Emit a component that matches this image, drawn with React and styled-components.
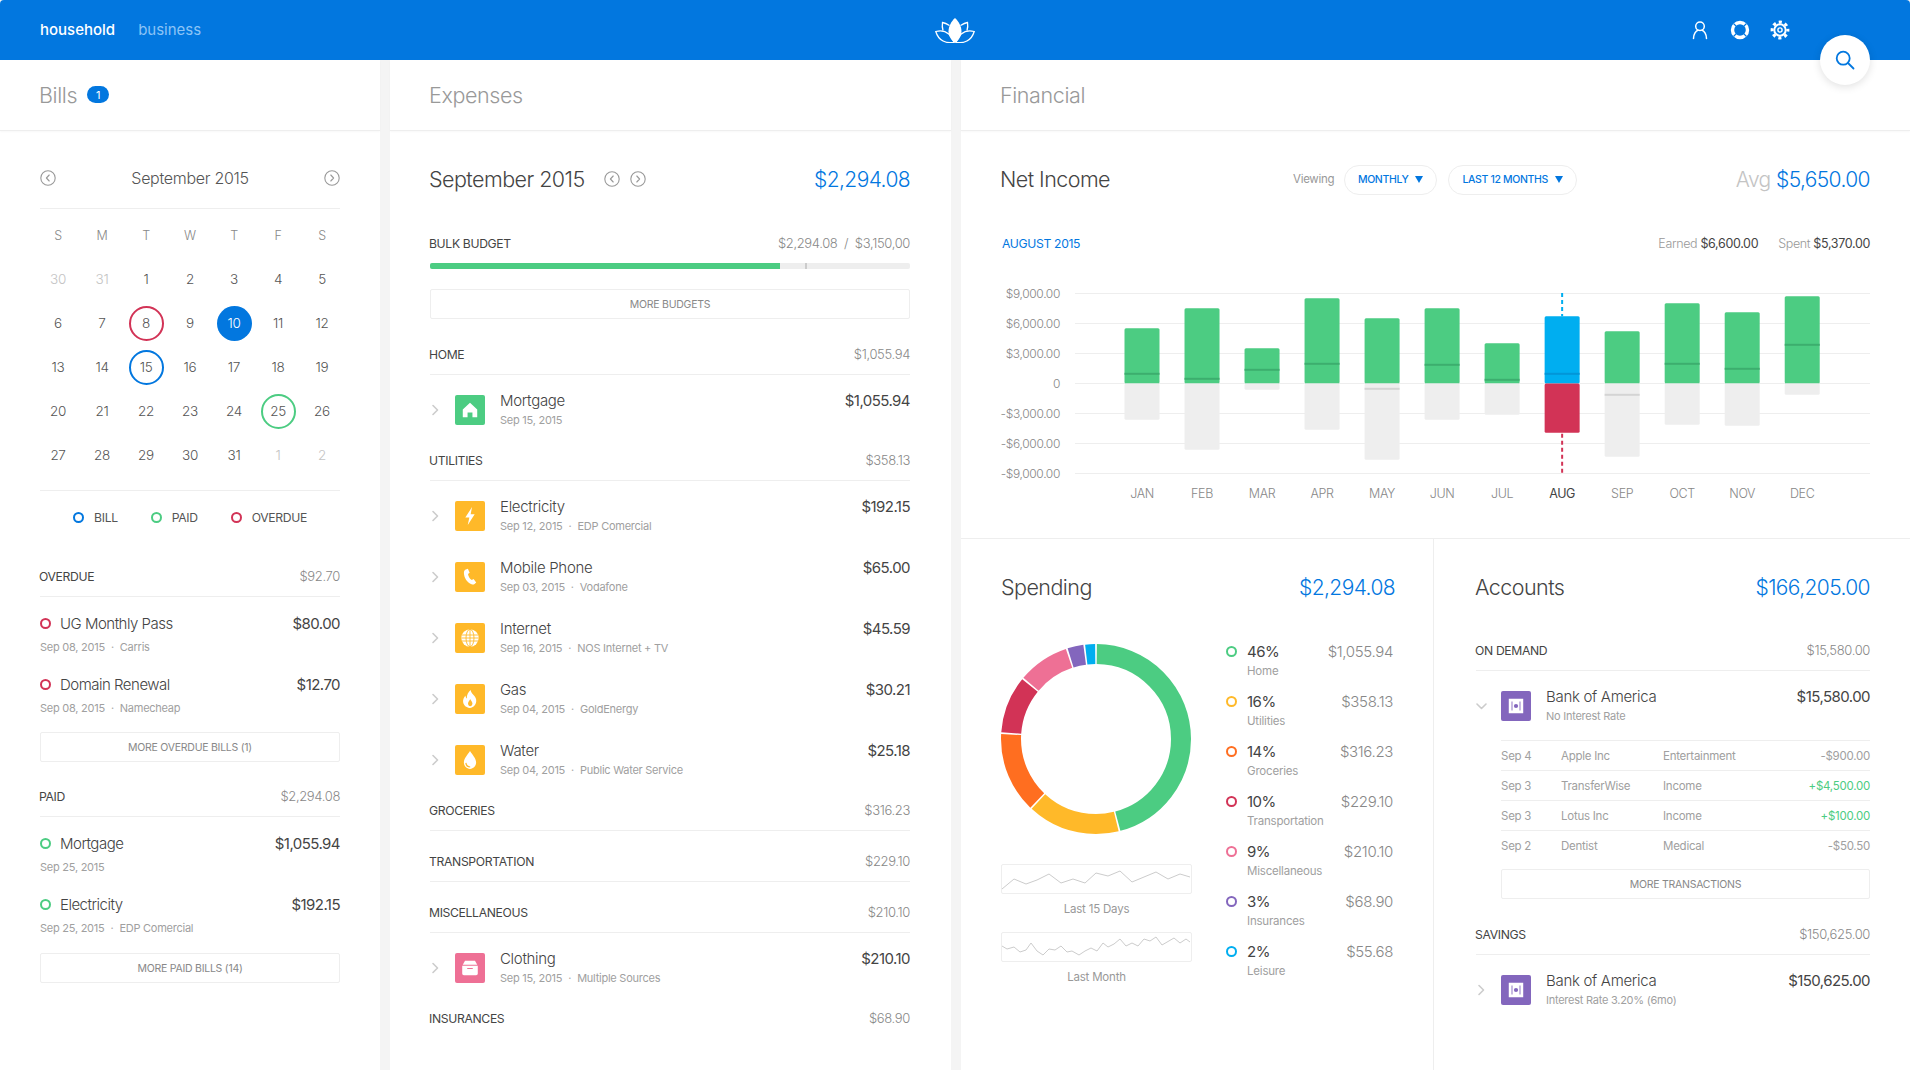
import React from 'react';
import styled, { createGlobalStyle } from 'styled-components';

const BLUE = '#0277df';
const GREEN = '#4ccc82';
const YELLOW = '#ffb929';
const ORANGE = '#ff6e20';
const RED = '#d23356';
const PINK = '#ee7095';
const PURPLE = '#8366bd';
const CYAN = '#00aef0';

const GlobalStyle = createGlobalStyle`
  html, body {
    margin: 0;
    padding: 0;
    background: #fff;
  }
  body {
    font-family: Inter, "Liberation Sans", sans-serif;
    color: #444;
    letter-spacing: -0.3px;
  }
  * { box-sizing: border-box; }
`;

const Page = styled.div`
  width: 1910px;
  height: 1070px;
  overflow: hidden;
  position: relative;
  display: flex;
  flex-direction: column;
  background: #f4f4f4;
`;

const TopBar = styled.header`
  height: 60px;
  flex: none;
  background: ${BLUE};
  border-radius: 4px 4px 0 0;
  display: grid;
  grid-template-columns: 1fr auto 1fr;
  align-items: center;
  padding: 0 40px;
`;

const Tabs = styled.nav`
  display: flex;
  gap: 23px;
  padding-bottom: 2px;
`;

const Tab = styled.span`
  font-size: 15px;
  font-weight: ${p => (p.$active ? 500 : 400)};
  color: ${p => (p.$active ? '#fff' : '#8cc4f6')};
  letter-spacing: 0;
`;

const LogoMark = styled.svg`
  width: 40px;
  height: 25px;
  display: block;
`;

const TopIcons = styled.div`
  display: flex;
  justify-content: flex-end;
  gap: 20px;
  padding-right: 80px;
`;

const TopIcon = styled.svg`
  width: 20px;
  height: 20px;
  display: block;
`;

const SearchButton = styled.button`
  position: absolute;
  top: 35px;
  right: 40px;
  width: 50px;
  height: 50px;
  padding: 0;
  border: 0;
  border-radius: 50%;
  background: #fff;
  box-shadow: 0 2px 8px rgba(0, 0, 0, 0.12);
  display: flex;
  align-items: center;
  justify-content: center;
`;

const Columns = styled.main`
  flex: 1;
  min-height: 0;
  display: grid;
  grid-template-columns: 380px 561px 949px;
  gap: 10px;
`;

const Panel = styled.section`
  background: #fff;
  display: flex;
  flex-direction: column;
  min-height: 0;
`;

const PanelHead = styled.div`
  height: 71px;
  flex: none;
  padding: 0 0 1px 39px;
  display: flex;
  align-items: center;
  gap: 10px;
  border-bottom: 1px solid #eee;
  box-shadow: 0 1px 2px rgba(0, 0, 0, 0.03);
`;

const PanelTitle = styled.h1`
  margin: 0;
  font-size: 21.5px;
  font-weight: 300;
  color: #999;
  letter-spacing: -0.4px;
`;

const Badge = styled.span`
  width: 22px;
  height: 17px;
  border-radius: 9px;
  background: ${BLUE};
  color: #fff;
  font-size: 11px;
  display: flex;
  align-items: center;
  justify-content: center;
`;

const PanelBody = styled.div`
  padding: 0 ${p => p.$right ?? 40}px 0 ${p => p.$left ?? 40}px;
`;

const CalHead = styled.div`
  margin-top: 30px;
  height: 48px;
  padding-bottom: 13px;
  border-bottom: 1px solid #eee;
  display: flex;
  align-items: center;
  justify-content: space-between;
`;

const CalTitle = styled.span`
  font-size: 16px;
  font-weight: 300;
  color: #555;
  letter-spacing: -0.3px;
`;

const RoundArrow = styled.svg`
  width: 16px;
  height: 16px;
  display: block;
  flex: none;
`;

const CalGrid = styled.div`
  margin: 5px -4px 0;
  display: grid;
  grid-template-columns: repeat(7, 44px);
  grid-template-rows: 43px repeat(5, 44px);
  justify-content: center;
`;

const WeekDay = styled.div`
  font-size: 12.5px;
  font-weight: 300;
  color: #888;
  display: flex;
  align-items: center;
  justify-content: center;
`;

const markColors = { overdue: RED, due: BLUE, paid: GREEN };

const Day = styled.div`
  width: 35px;
  height: 35px;
  margin: auto;
  border-radius: 50%;
  font-size: 13.5px;
  font-weight: 300;
  display: flex;
  align-items: center;
  justify-content: center;
  color: ${p => (p.$muted ? '#c4c4c4' : p.$today ? '#fff' : '#555')};
  background: ${p => (p.$today ? BLUE : 'transparent')};
  border: 2px solid ${p => markColors[p.$mark] || 'transparent'};
`;

const Legend = styled.div`
  margin-top: 13px;
  height: 53px;
  border-top: 1px solid #eee;
  display: flex;
  align-items: center;
  justify-content: center;
  gap: 33px;
`;

const LegendItem = styled.span`
  display: flex;
  align-items: center;
  gap: 10px;
  font-size: 12.2px;
  color: #555;
  letter-spacing: -0.35px;
`;

const Ring = styled.i`
  width: 11px;
  height: 11px;
  flex: none;
  display: block;
  border-radius: 50%;
  border: 2px solid ${p => p.$color};
`;

const SectionHead = styled.div`
  height: 41px;
  flex: none;
  margin-top: ${p => p.$gap ?? 15}px;
  border-bottom: 1px solid ${p => (p.$plain ? 'transparent' : '#eee')};
  display: flex;
  align-items: center;
  justify-content: space-between;
  font-size: 12.2px;
  color: #444;
  letter-spacing: -0.35px;
`;

const SectionName = styled.span`
  margin-left: -1px;
`;

const GreyAmount = styled.span`
  font-size: 13px;
  font-weight: 300;
  color: #888;
`;

const BillRow = styled.div`
  height: 61px;
  padding-top: 16px;
`;

const BillLine = styled.div`
  height: 20px;
  display: flex;
  align-items: center;
  gap: 9px;
  font-size: 15px;
  font-weight: 300;
  color: #444;
  letter-spacing: -0.5px;
`;

const Amount = styled.span`
  margin-left: auto;
  font-size: 15px;
  font-weight: 400;
  color: #444;
  letter-spacing: -0.55px;
`;

const Meta = styled.div`
  height: 20px;
  margin-top: ${p => p.$gap || 0}px;
  display: flex;
  align-items: center;
  gap: 5px;
  font-size: 11px;
  font-weight: 400;
  color: #a0a0a0;
  letter-spacing: -0.25px;
`;

const OutlineButton = styled.button`
  display: block;
  width: 100%;
  height: 30px;
  margin-top: ${p => p.$gap ?? 13}px;
  padding: 0;
  background: #fff;
  border: 1px solid #eee;
  border-radius: 2px;
  font-family: inherit;
  font-size: 10.5px;
  font-weight: 400;
  color: #888;
  letter-spacing: -0.25px;
`;

const TitleRow = styled.div`
  margin-top: 30px;
  height: 36px;
  display: flex;
  align-items: center;
`;

const LargeTitle = styled.h2`
  margin: 0 0 0 -1px;
  font-size: 21.5px;
  font-weight: 300;
  color: #444;
  letter-spacing: -0.55px;
`;

const LargeTotal = styled.span`
  margin-left: auto;
  font-size: 21px;
  font-weight: 300;
  color: ${BLUE};
  letter-spacing: -0.6px;
`;

const ArrowPair = styled.div`
  display: flex;
  gap: 10px;
  margin-left: 19px;
`;

const InfoRow = styled.div`
  margin-top: ${p => p.$gap ?? 36}px;
  height: 20px;
  display: flex;
  align-items: center;
  justify-content: space-between;
  font-size: 12.2px;
  color: #444;
  letter-spacing: -0.35px;
`;

const Track = styled.div`
  height: 6px;
  margin-top: 10px;
  border-radius: 2px;
  background: #eee;
  position: relative;
`;

const TrackFill = styled.div`
  width: ${p => p.$width}px;
  height: 100%;
  border-radius: 2px 0 0 2px;
  background: ${GREEN};
`;

const TrackTick = styled.i`
  position: absolute;
  left: 375px;
  top: 0;
  width: 2px;
  height: 6px;
  background: #ccc;
`;

const Row = styled.div`
  display: flex;
  align-items: center;
  height: 30px;
  margin-top: ${p => p.$gap ?? 31}px;
`;

const RowArrow = styled.svg`
  width: 25px;
  height: 14px;
  flex: none;
  display: block;
`;

const Tile = styled.div`
  width: 30px;
  height: 30px;
  flex: none;
  border-radius: 2px;
  background: ${p => p.$color};
  display: flex;
  align-items: center;
  justify-content: center;
`;

const TileIcon = styled.svg`
  width: 20px;
  height: 20px;
  display: block;
`;

const RowText = styled.div`
  margin: 0 0 0 15px;
  height: 40px;
`;

const RowTitle = styled.div`
  height: 20px;
  display: flex;
  align-items: center;
  font-size: 15px;
  font-weight: 300;
  color: #444;
`;

const RowAmount = styled(Amount)`
  align-self: flex-start;
  height: 20px;
  line-height: 20px;
  margin-top: -4px;
`;

const Dot = styled.span`
  color: #aaa;
  padding: 0 1px;
`;

const Viewing = styled.span`
  margin-left: 183px;
  font-size: 11.5px;
  color: #999;
`;

const Pill = styled.button`
  height: 30px;
  margin-top: 1px;
  margin-left: ${p => p.$gap}px;
  width: ${p => p.$width}px;
  padding: 0;
  background: #fff;
  border: 1px solid #eee;
  border-radius: 15px;
  font-family: inherit;
  font-size: 10.5px;
  font-weight: 500;
  color: ${BLUE};
  letter-spacing: -0.35px;
  display: flex;
  align-items: center;
  justify-content: center;
  gap: 7px;
`;

const Caret = styled.i`
  width: 0;
  height: 0;
  display: block;
  border-left: 4px solid transparent;
  border-right: 4px solid transparent;
  border-top: 7px solid ${BLUE};
`;

const AvgLabel = styled.span`
  font-weight: 300;
  color: #c4c4c4;
`;

const BlueLabel = styled.span`
  color: ${BLUE};
  margin-left: 1px;
`;

const EarnedBox = styled.div`
  display: flex;
  gap: 20px;
  font-size: 12.5px;
  color: #444;
`;

const SoftLabel = styled.span`
  color: #999;
  font-weight: 300;
`;

const ChartBox = styled.div`
  height: 284px;
  margin: 1px 0 0 -1px;
`;

const ChartSvg = styled.svg`
  width: 870px;
  height: 284px;
  display: block;
  font-family: Inter, "Liberation Sans", sans-serif;
  letter-spacing: -0.35px;
`;

const TopSection = styled.div`
  padding: 0 40px 0 40px;
  border-bottom: 1px solid #eee;
  flex: none;
`;

const BottomGrid = styled.div`
  flex: 1;
  min-height: 0;
  display: grid;
  grid-template-columns: 473px 1fr;
`;

const SpendingCol = styled.div`
  padding: 0 38px 0 41px;
  border-right: 1px solid #eee;
`;

const AccountsCol = styled.div`
  padding: 0 40px 0 42px;
`;

const SpendingGrid = styled.div`
  margin-top: 37px;
  display: grid;
  grid-template-columns: 190px 167px;
  column-gap: 34px;
`;

const DonutCol = styled.div`
  padding-top: 2px;
  margin-left: -1px;
`;

const DonutSvg = styled.svg`
  width: 190px;
  height: 190px;
  display: block;
  margin-bottom: 30px;
`;

const SparkBox = styled.div`
  height: 30px;
  border: 1px solid #eee;
  border-radius: 2px;
  margin-top: ${p => p.$gap || 0}px;
`;

const SparkSvg = styled.svg`
  width: 188px;
  height: 28px;
  display: block;
`;

const SparkLabel = styled.div`
  height: 20px;
  margin-top: 5px;
  text-align: center;
  line-height: 20px;
  font-size: 11.5px;
  color: #999;
  letter-spacing: -0.2px;
`;

const LegendList = styled.div`
  display: flex;
  flex-direction: column;
`;

const SpendRow = styled.div`
  height: 50px;
  display: grid;
  grid-template-columns: 11px 1fr auto;
  grid-template-rows: 19px 20px;
  column-gap: 10px;
  align-items: center;
`;

const Percent = styled.span`
  font-size: 15px;
  font-weight: 400;
  color: #444;
  letter-spacing: -0.5px;
`;

const SpendAmount = styled.span`
  font-size: 15px;
  font-weight: 300;
  color: #888;
  letter-spacing: -0.35px;
`;

const SpendName = styled.span`
  grid-column: 2 / 4;
  font-size: 11.5px;
  color: #a0a0a0;
  letter-spacing: -0.2px;
`;

const TxTable = styled.div`
  margin: 19px 0 0 25px;
`;

const TxRow = styled.div`
  height: 30px;
  border-top: 1px solid #eee;
  display: grid;
  grid-template-columns: 60px 102px 1fr auto;
  align-items: center;
  font-size: 11.5px;
  color: #a0a0a0;
  letter-spacing: -0.25px;
`;

const TxAmount = styled.span`
  color: ${p => (p.$in ? GREEN : '#a0a0a0')};
`;

const TxFooter = styled.div`
  margin-left: 25px;
`;

// ---- drawings ----

const ArrowCircle = ({ left }) => (
  <RoundArrow viewBox="0 0 16 16" fill="none" stroke="#999" strokeWidth="1.1" strokeLinecap="round" strokeLinejoin="round">
    <circle cx="8" cy="8" r="7.2" />
    <path d={left ? 'M9.2 5L6.4 8l2.8 3' : 'M6.8 5l2.8 3-2.8 3'} />
  </RoundArrow>
);

const Chevron = ({ open }) => (
  <RowArrow viewBox="0 0 25 14" fill="none" stroke="#ccc" strokeWidth="1.6" strokeLinecap="round" strokeLinejoin="round">
    <path d={open ? 'M1 5l4.5 4.5L10 5' : 'M3 2.5L7.5 7 3 11.5'} />
  </RowArrow>
);

const tileDrawings = {
  home: <path fill="#fff" d="M9 2.5L2.5 8.6V15.5h4.3v-4.3h4.4v4.3h4.3V8.6z" />,
  bolt: <path fill="#fff" d="M10.8 1L4.8 10.4h3.6L7 17l6.2-9.6H9.6z" />,
  phone: (
    <path
      fill="#fff"
      d="M5.2 2.2l1.9-.6 1.6 3.6-1.5 1.1c.3 2.2 1.6 4.3 3.4 5.5l1.6-.9 2.4 3-1.5 1.4c-.7.6-1.8.7-2.7.3C6.500 13.900 3.700 9.800 3.500 5.300c0-1.400.6-2.600 1.700-3.100z"
    />
  ),
  globe: (
    <g>
      <circle cx="9" cy="9" r="7.800" fill="#fff" />
      <g stroke={YELLOW} strokeWidth="0.8" fill="none">
        <ellipse cx="9" cy="9" rx="3.600" ry="7.800" />
        <path d="M9 1.200v15.600M1.400 6.300h15.200M1.200 9h15.600M1.400 11.700h15.200" />
      </g>
    </g>
  ),
  flame: (
    <path
      fill="#fff"
      fillRule="evenodd"
      d="M9.500 1c.6 2.700 2.200 3.700 3.500 5.400 1.100 1.400 1.800 3 1.600 4.800-.3 3.100-2.800 5.500-5.600 5.800-3 .2-5.800-2-6.200-5.200-.3-2.200.8-4.300 2.100-5.900.1 1.200.5 2.100 1.300 2.700C5.800 5.600 7.500 3 9.500 1zM9.200 9c-.3 1.400-1.900 2.300-2 4 0 1.400 1 2.500 2 2.500s2-1.100 2-2.500c-.1-1.700-1.700-2.600-2-4z"
    />
  ),
  drop: (
    <g>
      <path fill="#fff" d="M9 1c2.200 3.400 5.500 6.700 5.500 10.300 0 3.200-2.500 5.700-5.500 5.700s-5.500-2.500-5.500-5.700C3.500 7.700 6.800 4.400 9 1z" />
      <path fill="none" stroke={YELLOW} strokeWidth="1.100" d="M5.300 11.600c.2 2 1.800 3.600 3.900 3.700" />
    </g>
  ),
  box: (
    <g>
      <path fill="#fff" d="M4.500 2.500h9L15.500 6h-13z" />
      <path fill="#fff" fillRule="evenodd" d="M2 7h14v7c0 .9-.7 1.500-1.500 1.500h-11C2.700 15.500 2 14.900 2 14zM6.500 9v1h5V9z" />
    </g>
  ),
  safe: (
    <g>
      <path fill="#fff" fillRule="evenodd" d="M2.500 2.500h13v13h-13zM5 5v8h.8V5zM12.200 5v8h.8V5z" />
      <circle cx="9" cy="9" r="1.900" fill={PURPLE} />
    </g>
  ),
};

const CategoryTile = ({ kind, color }) => (
  <Tile $color={color}>
    <TileIcon viewBox="0 0 18 18">{tileDrawings[kind]}</TileIcon>
  </Tile>
);

const Lotus = () => (
  <LogoMark viewBox="0 0 40 25" fill="none" stroke="#fff" strokeWidth="1.300">
    <path fill="#fff" stroke="none" d="M20 0c3.500 3.500 6.500 8 6.500 13.500 0 4.500-3 9-6.500 11.500-3.500-2.500-6.500-7-6.500-11.500C13.500 8 16.500 3.500 20 0z" />
    <path d="M14.500 7.500C12 6 10 5 7.500 4.500c-.5 3-.3 5.500.5 8M25.500 7.500C28 6 30 5 32.500 4.500c.5 3 .3 5.500-.5 8" />
    <path d="M.8 13.500c5-1.500 9.500-.5 13 2.500 2.500 2.300 4 5.300 5.200 8.300-7.500 1.500-15.500-1.300-18.200-10.800z" />
    <path d="M39.200 13.500c-5-1.500-9.500-.5-13 2.500-2.500 2.300-4 5.300-5.200 8.300 7.500 1.500 15.500-1.300 18.200-10.800z" />
  </LogoMark>
);

const UserIcon = () => (
  <TopIcon viewBox="0 0 20 20" fill="none" stroke="#fff" strokeWidth="1.500" strokeLinecap="round">
    <circle cx="10" cy="6.300" r="4.300" />
    <path d="M3.500 18.500c0-4.500 2.500-7.800 4.500-8.200M16.500 18.500c0-4.500-2.500-7.800-4.500-8.200" />
  </TopIcon>
);

const BuoyIcon = () => (
  <TopIcon viewBox="0 0 20 20" fill="none">
    <circle cx="10" cy="10" r="7.500" stroke="#fff" strokeWidth="3.400" />
    <path stroke={BLUE} strokeWidth="1.200" d="M3.500 3.500l3.800 3.800M16.500 3.500l-3.800 3.800M3.500 16.500l3.800-3.800M16.500 16.500l-3.800-3.800" />
  </TopIcon>
);

const GearIcon = () => (
  <TopIcon viewBox="0 0 20 20" fill="none" stroke="#fff">
    <circle cx="10" cy="10" r="7.900" strokeWidth="3" strokeDasharray="3.100 3.105" strokeDashoffset="1.500" />
    <circle cx="10" cy="10" r="5.700" strokeWidth="2" />
    <circle cx="10" cy="10" r="2.100" strokeWidth="1.400" />
  </TopIcon>
);

const SearchIcon = () => (
  <svg width="20" height="20" viewBox="0 0 20 20" fill="none" stroke={BLUE} strokeWidth="1.800" strokeLinecap="round">
    <circle cx="8.200" cy="8.200" r="6.500" />
    <path d="M13 13l5.500 5.500" />
  </svg>
);

// ---- data ----

const months = [
  ['JAN', 55.3, 9.7, 36.3],
  ['FEB', 75.3, 4.7, 66.3],
  ['MAR', 35.3, 13.7, 6.3],
  ['APR', 85.3, 19.7, 46.3],
  ['MAY', 65.3, 0, 76.3, 5.3],
  ['JUN', 75.3, 18.7, 36.3],
  ['JUL', 40.3, 3.7, 31.3],
  ['AUG', 67.3, 9.7, 49.3],
  ['SEP', 52.3, 0, 73.3, 11.3],
  ['OCT', 80.3, 19.7, 41.3],
  ['NOV', 71.3, 14.7, 42.3],
  ['DEC', 87.3, 38.7, 11.3],
];

const axis = ['$9,000.00', '$6,000.00', '$3,000.00', '0', '-$3,000.00', '-$6,000.00', '-$9,000.00'];

const NetIncomeChart = () => {
  const zero = 383.5;
  return (
    <ChartSvg viewBox="1000 254 870 284">
      {axis.map((label, i) => {
        const y = 293.5 + i * 30;
        return (
          <g key={label}>
            <line x1="1075" x2="1870" y1={y} y2={y} stroke="#eee" strokeWidth="1" />
            <text x="1060" y={y + 4.5} textAnchor="end" fontSize="12" fontWeight="300" fill="#888">{label}</text>
          </g>
        );
      })}
      {months.map(([name, up, mark, down, downMark], i) => {
        const cx = 1142 + i * 60.020;
        const x = cx - 17.500;
        const active = name === 'AUG';
        return (
          <g key={name}>
            <rect x={x} y={zero - up} width="35" height={up} rx="1.500" fill={active ? CYAN : GREEN} />
            <rect x={x} y={zero} width="35" height={down} rx="1.500" fill={active ? RED : '#eee'} />
            {mark > 0 && <rect x={x} y={zero - mark - 1} width="35" height="2" fill={active ? '#0296d8' : '#3cae6e'} />}
            {downMark && <rect x={x} y={zero + downMark - 1} width="35" height="2" fill="#d4d4d4" />}
            {active && (
              <g strokeWidth="2" strokeDasharray="4 3">
                <line x1={cx} x2={cx} y1="293" y2={zero - up} stroke={CYAN} />
                <line x1={cx} x2={cx} y1={zero + down + 1} y2="474" stroke={RED} />
              </g>
            )}
            <text x={cx} y="498" textAnchor="middle" fontSize="12.500" fontWeight={active ? 400 : 300} fill={active ? '#444' : '#888'}>{name}</text>
          </g>
        );
      })}
    </ChartSvg>
  );
};

const spending = [
  ['46%', 'Home', '$1,055.94', GREEN, 46],
  ['16%', 'Utilities', '$358.13', YELLOW, 16],
  ['14%', 'Groceries', '$316.23', ORANGE, 14],
  ['10%', 'Transportation', '$229.10', RED, 10],
  ['9%', 'Miscellaneous', '$210.10', PINK, 9],
  ['3%', 'Insurances', '$68.90', PURPLE, 3],
  ['2%', 'Leisure', '$55.68', CYAN, 2],
];

const Donut = () => {
  let start = 0;
  return (
    <DonutSvg viewBox="0 0 190 190">
      {spending.map(([pct, , , color, share]) => {
        const offset = -start - 0.15;
        start += share;
        return (
          <circle
            key={pct + color}
            cx="95"
            cy="95"
            r="85"
            fill="none"
            stroke={color}
            strokeWidth="20"
            pathLength="100"
            strokeDasharray={`${share - 0.3} ${100 - share + 0.3}`}
            strokeDashoffset={offset}
            transform="rotate(-90 95 95)"
          />
        );
      })}
    </DonutSvg>
  );
};

const spark15 = '0,24 12,14 24,19 35,15 47,9 59,18 71,14 83,18 94,8 106,11 118,6 130,17 142,12 154,7 166,14 178,9 188,12';
const sparkMonth = '0,13 5,16 12,14 18,19 24,17 29,10 35,18 41,22 47,16 53,17 59,13 65,19 70,18 77,22 83,18 89,15 95,18 101,10 106,14 112,11 118,6 124,13 130,10 136,13 142,6 148,8 154,4 160,12 172,5 178,10 184,6 188,9';

const Spark = ({ points, gap }) => (
  <SparkBox $gap={gap}>
    <SparkSvg viewBox="0 0 188 28">
      <polyline points={points} fill="none" stroke="#ccc" strokeWidth="1" />
    </SparkSvg>
  </SparkBox>
);

const weekDays = ['S', 'M', 'T', 'W', 'T', 'F', 'S'];

const days = [
  [30, true], [31, true], [1], [2], [3], [4], [5],
  [6], [7], [8, false, 'overdue'], [9], [10, false, null, true], [11], [12],
  [13], [14], [15, false, 'due'], [16], [17], [18], [19],
  [20], [21], [22], [23], [24], [25, false, 'paid'], [26],
  [27], [28], [29], [30], [31], [1, true], [2, true],
];

const Bill = ({ color, name, amount, date, source }) => (
  <BillRow>
    <BillLine>
      <Ring $color={color} />
      {name}
      <Amount>{amount}</Amount>
    </BillLine>
    <Meta $gap={4}>
      {date}
      {source && <Dot>·</Dot>}
      {source}
    </Meta>
  </BillRow>
);

const Expense = ({ kind, color, name, amount, date, source, gap, open }) => (
  <Row $gap={gap}>
    <Chevron open={open} />
    <CategoryTile kind={kind} color={color} />
    <RowText>
      <RowTitle>{name}</RowTitle>
      <Meta>
        {date}
        {source && <Dot>·</Dot>}
        {source}
      </Meta>
    </RowText>
    <RowAmount>{amount}</RowAmount>
  </Row>
);

const Section = ({ name, amount, gap, plain }) => (
  <SectionHead $gap={gap} $plain={plain}>
    <SectionName>{name}</SectionName>
    <GreyAmount>{amount}</GreyAmount>
  </SectionHead>
);

const BillsPanel = () => (
  <Panel>
    <PanelHead>
      <PanelTitle>Bills</PanelTitle>
      <Badge>1</Badge>
    </PanelHead>
    <PanelBody>
      <CalHead>
        <ArrowCircle left />
        <CalTitle>September 2015</CalTitle>
        <ArrowCircle />
      </CalHead>
      <CalGrid>
        {weekDays.map((d, i) => <WeekDay key={i}>{d}</WeekDay>)}
        {days.map(([n, muted, mark, today], i) => (
          <Day key={i} $muted={muted} $mark={mark} $today={today}>{n}</Day>
        ))}
      </CalGrid>
      <Legend>
        <LegendItem><Ring $color={BLUE} />BILL</LegendItem>
        <LegendItem><Ring $color={GREEN} />PAID</LegendItem>
        <LegendItem><Ring $color={RED} />OVERDUE</LegendItem>
      </Legend>
      <Section name="OVERDUE" amount="$92.70" gap={13} />
      <Bill color={RED} name="UG Monthly Pass" amount="$80.00" date="Sep 08, 2015" source="Carris" />
      <Bill color={RED} name="Domain Renewal" amount="$12.70" date="Sep 08, 2015" source="Namecheap" />
      <OutlineButton>MORE OVERDUE BILLS (1)</OutlineButton>
      <Section name="PAID" amount="$2,294.08" gap={14} />
      <Bill color={GREEN} name="Mortgage" amount="$1,055.94" date="Sep 25, 2015" />
      <Bill color={GREEN} name="Electricity" amount="$192.15" date="Sep 25, 2015" source="EDP Comercial" />
      <OutlineButton $gap={14}>MORE PAID BILLS (14)</OutlineButton>
    </PanelBody>
  </Panel>
);

const ExpensesPanel = () => (
  <Panel>
    <PanelHead>
      <PanelTitle>Expenses</PanelTitle>
    </PanelHead>
    <PanelBody $right={41}>
      <TitleRow>
        <LargeTitle>September 2015</LargeTitle>
        <ArrowPair>
          <ArrowCircle left />
          <ArrowCircle />
        </ArrowPair>
        <LargeTotal>$2,294.08</LargeTotal>
      </TitleRow>
      <InfoRow>
        <SectionName>BULK BUDGET</SectionName>
        <GreyAmount>$2,294.08 &nbsp;/&nbsp; $3,150,00</GreyAmount>
      </InfoRow>
      <Track>
        <TrackFill $width={350} />
        <TrackTick />
      </Track>
      <OutlineButton $gap={20}>MORE BUDGETS</OutlineButton>
      <Section name="HOME" amount="$1,055.94" />
      <Expense gap={20} kind="home" color={GREEN} name="Mortgage" amount="$1,055.94" date="Sep 15, 2015" />
      <Section name="UTILITIES" amount="$358.13" />
      <Expense gap={20} kind="bolt" color={YELLOW} name="Electricity" amount="$192.15" date="Sep 12, 2015" source="EDP Comercial" />
      <Expense kind="phone" color={YELLOW} name="Mobile Phone" amount="$65.00" date="Sep 03, 2015" source="Vodafone" />
      <Expense kind="globe" color={YELLOW} name="Internet" amount="$45.59" date="Sep 16, 2015" source="NOS Internet + TV" />
      <Expense kind="flame" color={YELLOW} name="Gas" amount="$30.21" date="Sep 04, 2015" source="GoldEnergy" />
      <Expense kind="drop" color={YELLOW} name="Water" amount="$25.18" date="Sep 04, 2015" source="Public Water Service" />
      <Section name="GROCERIES" amount="$316.23" />
      <Section name="TRANSPORTATION" amount="$229.10" gap={10} />
      <Section name="MISCELLANEOUS" amount="$210.10" gap={10} />
      <Expense gap={20} kind="box" color={PINK} name="Clothing" amount="$210.10" date="Sep 15, 2015" source="Multiple Sources" />
      <Section name="INSURANCES" amount="$68.90" plain />
    </PanelBody>
  </Panel>
);

const transactions = [
  ['Sep 4', 'Apple Inc', 'Entertainment', '-$900.00'],
  ['Sep 3', 'TransferWise', 'Income', '+$4,500.00', true],
  ['Sep 3', 'Lotus Inc', 'Income', '+$100.00', true],
  ['Sep 2', 'Dentist', 'Medical', '-$50.50'],
];

const FinancialPanel = () => (
  <Panel>
    <PanelHead>
      <PanelTitle>Financial</PanelTitle>
    </PanelHead>
    <TopSection>
      <TitleRow>
        <LargeTitle>Net Income</LargeTitle>
        <Viewing>Viewing</Viewing>
        <Pill $gap={10} $width={93}>MONTHLY <Caret /></Pill>
        <Pill $gap={11} $width={129}>LAST 12 MONTHS <Caret /></Pill>
        <LargeTotal><AvgLabel>Avg</AvgLabel> $5,650.00</LargeTotal>
      </TitleRow>
      <InfoRow>
        <BlueLabel>AUGUST 2015</BlueLabel>
        <EarnedBox>
          <span><SoftLabel>Earned</SoftLabel> $6,600.00</span>
          <span><SoftLabel>Spent</SoftLabel> $5,370.00</span>
        </EarnedBox>
      </InfoRow>
      <ChartBox>
        <NetIncomeChart />
      </ChartBox>
    </TopSection>
    <BottomGrid>
      <SpendingCol>
        <TitleRow>
          <LargeTitle>Spending</LargeTitle>
          <LargeTotal>$2,294.08</LargeTotal>
        </TitleRow>
        <SpendingGrid>
          <DonutCol>
            <Donut />
            <Spark points={spark15} />
            <SparkLabel>Last 15 Days</SparkLabel>
            <Spark points={sparkMonth} gap={13} />
            <SparkLabel>Last Month</SparkLabel>
          </DonutCol>
          <LegendList>
            {spending.map(([pct, name, amount, color]) => (
              <SpendRow key={name}>
                <Ring $color={color} />
                <Percent>{pct}</Percent>
                <SpendAmount>{amount}</SpendAmount>
                <i />
                <SpendName>{name}</SpendName>
              </SpendRow>
            ))}
          </LegendList>
        </SpendingGrid>
      </SpendingCol>
      <AccountsCol>
        <TitleRow>
          <LargeTitle>Accounts</LargeTitle>
          <LargeTotal>$166,205.00</LargeTotal>
        </TitleRow>
        <Section name="ON DEMAND" amount="$15,580.00" gap={25} />
        <Expense gap={20} open kind="safe" color={PURPLE} name="Bank of America" amount="$15,580.00" date="No Interest Rate" />
        <TxTable>
          {transactions.map(([date, name, type, amount, income]) => (
            <TxRow key={name}>
              <span>{date}</span>
              <span>{name}</span>
              <span>{type}</span>
              <TxAmount $in={income}>{amount}</TxAmount>
            </TxRow>
          ))}
        </TxTable>
        <TxFooter>
          <OutlineButton $gap={9}>MORE TRANSACTIONS</OutlineButton>
        </TxFooter>
        <Section name="SAVINGS" amount="$150,625.00" />
        <Expense gap={20} kind="safe" color={PURPLE} name="Bank of America" amount="$150,625.00" date="Interest Rate 3.20% (6mo)" />
      </AccountsCol>
    </BottomGrid>
  </Panel>
);

export default function App() {
  return (
    <Page>
      <GlobalStyle />
      <TopBar>
        <Tabs>
          <Tab $active>household</Tab>
          <Tab>business</Tab>
        </Tabs>
        <Lotus />
        <TopIcons>
          <UserIcon />
          <BuoyIcon />
          <GearIcon />
        </TopIcons>
      </TopBar>
      <SearchButton aria-label="search"><SearchIcon /></SearchButton>
      <Columns>
        <BillsPanel />
        <ExpensesPanel />
        <FinancialPanel />
      </Columns>
    </Page>
  );
}
